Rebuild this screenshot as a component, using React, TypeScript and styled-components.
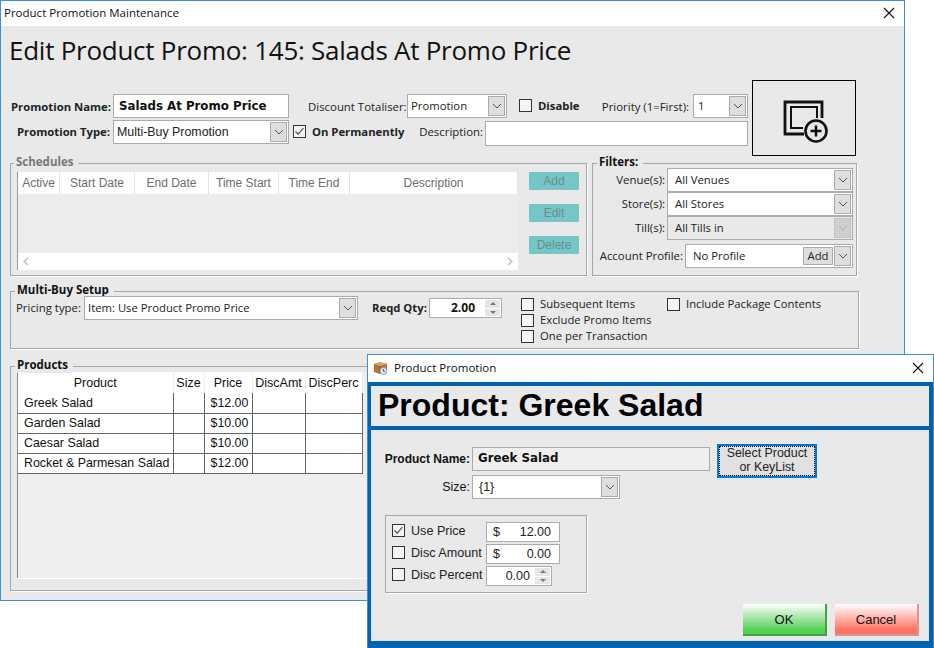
import React from 'react'
import styled, { createGlobalStyle } from 'styled-components'

const GlobalStyle = createGlobalStyle`
  html, body { margin: 0; padding: 0; background: #fff; }
  body { font-family: "Open Sans", "Noto Sans", sans-serif; font-size: 12px; color: #111; }
  * { box-sizing: border-box; }
`

const Page = styled.div`
  position: relative;
  width: 934px;
  height: 648px;
  overflow: hidden;
  background: #fff;
`

const MainWindow = styled.div`
  width: 905px;
  height: 601px;
  border: 1px solid #3e8ede;
  background: #e9e9e9;
  overflow: hidden;
`

const TitleBar = styled.div<{ $h: number; $pl: number }>`
  display: flex;
  align-items: center;
  gap: 6px;
  height: ${p => p.$h}px;
  padding: 0 9px 2px ${p => p.$pl}px;
  background: #fff;
  font-size: 11.5px;
`

const TitleText = styled.span`
  flex: 1;
`

const Heading = styled.h1`
  margin: 0;
  height: 54px;
  padding: 6px 0 0 8px;
  font-size: 26px;
  font-weight: 400;
  line-height: 36px;
  letter-spacing: -0.26px;
  color: #111;
`

const TopSection = styled.div`
  display: flex;
  height: 76px;
`

const FormColumn = styled.div`
  width: 751px;
  padding-top: 14px;
  display: flex;
  flex-direction: column;
  gap: 2px;
`

const Row = styled.div`
  display: flex;
  align-items: flex-start;
  height: 24px;
`

const Label = styled.label<{ $w: number; $bold?: boolean; $ml?: number; $left?: boolean; $lh?: number }>`
  flex: none;
  width: ${p => p.$w}px;
  margin-left: ${p => p.$ml || 0}px;
  text-align: ${p => (p.$left ? 'left' : 'right')};
  font-weight: ${p => (p.$bold ? 700 : 400)};
  font-size: ${p => (p.$bold ? '11.3px' : '11.4px')};
  line-height: ${p => p.$lh || 24}px;
  white-space: nowrap;
  color: #222;
`

const TextInput = styled.div<{ $w: number; $h?: number; $ml?: number; $mt?: number; $grey?: boolean; $lh?: number }>`
  flex: none;
  width: ${p => p.$w}px;
  height: ${p => p.$h || 24}px;
  margin-left: ${p => p.$ml || 0}px;
  margin-top: ${p => p.$mt || 0}px;
  padding-left: 5px;
  border: 1px solid #ababab;
  background: ${p => (p.$grey ? '#efefef' : '#fff')};
  font-family: "DejaVu Sans", sans-serif;
  font-weight: 700;
  font-size: 11.8px;
  line-height: ${p => p.$lh || 20}px;
  color: #111;
`

const ComboBox = styled.div<{ $w: number; $ml?: number; $disabled?: boolean }>`
  flex: none;
  position: relative;
  display: flex;
  align-items: center;
  width: ${p => p.$w}px;
  height: 24px;
  margin-left: ${p => p.$ml || 0}px;
  padding: 0 19px 0 3px;
  border: 1px solid #ababab;
  background: ${p => (p.$disabled ? '#e9e9e9' : '#fff')};
  font-size: 11.3px;
  color: #222;
  white-space: nowrap;
`

const ComboText = styled.span<{ $pad?: number; $sans?: boolean }>`
  flex: 1;
  padding-left: ${p => p.$pad || 0}px;
  margin-top: -1px;
  ${p => (p.$sans ? 'font-family: "Liberation Sans", sans-serif; font-size: 12.4px;' : '')}
`

const ArrowBox = styled.span<{ $disabled?: boolean }>`
  position: absolute;
  right: 1px;
  top: 1px;
  bottom: 1px;
  width: 17px;
  display: flex;
  align-items: center;
  justify-content: center;
  border: 1px solid ${p => (p.$disabled ? '#c4c4c4' : '#ababab')};
  background: ${p => (p.$disabled ? '#cfcfcf' : '#dedede')};
`

const Chevron = ({ color = '#555' }: { color?: string }) => (
  <svg width="10" height="6" viewBox="0 0 10 6">
    <path d="M1 1 L5 5 L9 1" fill="none" stroke={color} strokeWidth="1" />
  </svg>
)

const Combo = (props: { w: number; ml?: number; text: string; disabled?: boolean; pad?: number; sans?: boolean; children?: React.ReactNode }) => (
  <ComboBox $w={props.w} $ml={props.ml} $disabled={props.disabled}>
    <ComboText $pad={props.pad} $sans={props.sans}>{props.text}</ComboText>
    {props.children}
    <ArrowBox $disabled={props.disabled}>
      <Chevron color={props.disabled ? '#aaa' : '#555'} />
    </ArrowBox>
  </ComboBox>
)

const CheckBox = styled.span<{ $ml?: number; $mt?: number }>`
  flex: none;
  display: inline-flex;
  align-items: center;
  justify-content: center;
  width: 13px;
  height: 13px;
  margin-left: ${p => p.$ml || 0}px;
  margin-top: ${p => (p.$mt === undefined ? 5 : p.$mt)}px;
  border: 1px solid #333;
  background: #f4f4f4;
`

const Tick = () => (
  <svg width="11" height="11" viewBox="0 0 11 11">
    <path d="M1.5 5.5 L4.2 8.2 L9.5 2" fill="none" stroke="#444" strokeWidth="1.1" />
  </svg>
)

const ImageBox = styled.div`
  flex: none;
  width: 104px;
  height: 76px;
  padding: 7px 0 0 4px;
  border: 1px solid #000;
  display: flex;
  align-items: center;
  justify-content: center;
`

const MiddleRow = styled.div`
  display: flex;
  gap: 5px;
  margin: 7px 0 0 9px;
`

const Group = styled.div<{ $w: number; $h: number; $mt?: number; $ml?: number }>`
  position: relative;
  flex: none;
  width: ${p => p.$w}px;
  height: ${p => p.$h}px;
  margin-top: ${p => p.$mt || 0}px;
  margin-left: ${p => p.$ml || 0}px;
  border: 1px solid #a6a6a6;
  box-shadow: 1px 1px 0 #fff;
`

const GroupTitle = styled.span<{ $muted?: boolean; $left?: number }>`
  position: absolute;
  left: ${p => p.$left || 4}px;
  top: -10px;
  padding: 0 5px 0 2px;
  background: #e9e9e9;
  font-size: 11.5px;
  font-weight: 700;
  line-height: 16px;
  color: ${p => (p.$muted ? '#777' : '#111')};
`

const SchedulesBody = styled.div`
  display: flex;
  padding: 8px 0 0 6px;
  gap: 11px;
`

const SchedulesGrid = styled.div`
  width: 501px;
  height: 98px;
  display: flex;
  flex-direction: column;
  border-left: 1px solid #999;
  background: #ececec;
`

const SchedulesHeader = styled.div`
  display: flex;
  height: 22px;
  background: #fff;
`

const SchedulesColumn = styled.div<{ $w: number }>`
  flex: ${p => (p.$w ? `0 0 ${p.$w}px` : 1)};
  border-right: 1px solid #e4e4e4;
  font-family: "Liberation Sans", sans-serif;
  font-size: 12px;
  line-height: 23px;
  text-align: center;
  color: #6d6d6d;
`

const ScrollStrip = styled.div`
  margin-top: auto;
  height: 17px;
  display: flex;
  align-items: center;
  justify-content: space-between;
  padding: 0 5px;
  background: #fff;
`

const SideButtons = styled.div`
  display: flex;
  flex-direction: column;
  gap: 14px;
`

const TealButton = styled.div`
  width: 50px;
  height: 18px;
  background: #75c6c6;
  font-family: "Liberation Sans", sans-serif;
  font-size: 12px;
  line-height: 18px;
  text-align: center;
  color: #6b8d8d;
`

const FiltersBody = styled.div`
  display: flex;
  flex-direction: column;
  padding-top: 4px;
`

const FilterRow = styled.div<{ $mt?: number }>`
  display: flex;
  height: 24px;
  margin-top: ${p => p.$mt || 0}px;
`

const AddChip = styled.span`
  position: absolute;
  right: 19px;
  top: 2px;
  width: 30px;
  height: 18px;
  border: 1px solid #ababab;
  background: #dedede;
  text-align: center;
  line-height: 15px;
`

const MultiBuyBody = styled.div`
  display: flex;
  padding: 4px 0 0 0;
`

const Spin = styled.span<{ $h: number }>`
  position: absolute;
  right: 1px;
  top: 1px;
  width: 15px;
  height: ${p => p.$h}px;
  display: flex;
  flex-direction: column;
  gap: 1px;
`

const SpinPart = styled.span`
  flex: 1;
  display: flex;
  align-items: center;
  justify-content: center;
  background: #e6e6e6;
`

const Triangle = styled.span<{ $down?: boolean }>`
  width: 0;
  height: 0;
  border-left: 3px solid transparent;
  border-right: 3px solid transparent;
  ${p => (p.$down ? 'border-top: 3px solid #777;' : 'border-bottom: 3px solid #777;')}
`

const Spinner = ({ h }: { h: number }) => (
  <Spin $h={h}>
    <SpinPart><Triangle /></SpinPart>
    <SpinPart><Triangle $down /></SpinPart>
  </Spin>
)

const QtyBox = styled.div`
  position: relative;
  flex: none;
  width: 73px;
  height: 20px;
  margin: 2px 0 0 1px;
  padding-right: 26px;
  border: 1px solid #ababab;
  background: #fff;
  font-weight: 700;
  font-size: 12px;
  line-height: 17px;
  text-align: right;
`

const OptionList = styled.div<{ $ml: number; $w: number }>`
  display: flex;
  flex-direction: column;
  gap: 3px;
  margin: 2px 0 0 ${p => p.$ml}px;
  width: ${p => p.$w}px;
`

const OptionRow = styled.div`
  display: flex;
  align-items: flex-start;
  gap: 6px;
  height: 13px;
  font-size: 11.3px;
  line-height: 12px;
  color: #222;
  white-space: nowrap;
`

const ProductsGrid = styled.div`
  margin: 5px 0 0 6px;
  width: 870px;
  height: 206px;
  border-left: 1px solid #888;
  background: #efefef;
  box-shadow: 0 1px 0 #fff;
`

const ProductTable = styled.table`
  border-collapse: collapse;
  table-layout: fixed;
  width: 344px;
  font-family: "Liberation Sans", sans-serif;
  font-size: 12.4px;
  color: #111;

  th {
    height: 21px;
    padding: 1px 0 0;
    font-weight: 400;
    font-size: 12.5px;
    background: #fff;
    border-right: 1px solid #eee;
    text-align: center;
  }

  td {
    height: 20px;
    padding: 0 3px 0 6px;
    background: #fff;
    border: 1px solid #666;
    white-space: nowrap;
  }

  tr td:first-child { border-left: 0; }
  tr:first-child td { border-top: 0; }
`

const Dialog = styled.div`
  position: absolute;
  left: 367px;
  top: 354px;
  width: 567px;
  height: 294px;
  display: flex;
  flex-direction: column;
  border: 1px solid #3e8ede;
  border-bottom: 0;
  background: #fff;
`

const DialogFrame = styled.div`
  flex: 1;
  display: flex;
  flex-direction: column;
  border: 4px solid #0063b1;
  border-bottom-width: 7px;
  border-left-width: 3px;
  background: #e9e9e9;
`

const DialogHeading = styled.h2`
  margin: 0;
  height: 44px;
  padding-left: 7px;
  border-bottom: 4px solid #0063b1;
  font-family: "Liberation Sans", sans-serif;
  font-size: 32px;
  font-weight: 700;
  line-height: 38px;
  color: #000;
`

const DialogPanel = styled.div`
  flex: 1;
  display: flex;
  flex-direction: column;
  padding-top: 16px;
  border: 1px solid #e2e2e2;
  border-radius: 4px;
  font-family: "Liberation Sans", sans-serif;
`

const DialogTop = styled.div`
  display: flex;
  align-items: flex-start;
`

const DialogFields = styled.div`
  display: flex;
  flex-direction: column;
  gap: 4px;
  width: 338px;
`

const DialogRow = styled.div`
  display: flex;
  height: 24px;
`

const DialogLabel = styled.span<{ $bold?: boolean }>`
  flex: none;
  width: 98px;
  margin-right: 2px;
  text-align: right;
  font-size: ${p => (p.$bold ? '12px' : '12.5px')};
  font-weight: ${p => (p.$bold ? 700 : 400)};
  line-height: 24px;
`

const SelectButton = styled.div`
  width: 100px;
  height: 34px;
  margin: -3px 0 0 7px;
  padding-top: 0;
  border: 2px solid #0078d7;
  background: #e1e1e1;
  font-size: 12.4px;
  line-height: 14px;
  text-align: center;
  color: #222;
  outline: 1px dotted #000;
  outline-offset: -3px;
`

const PriceGroup = styled.div`
  width: 202px;
  height: 78px;
  margin: 16px 0 0 13px;
  padding: 6px 0 0 6px;
  display: flex;
  flex-direction: column;
  gap: 2px;
  border: 1px solid #a6a6a6;
  box-shadow: 1px 1px 0 #fff;
`

const PriceRow = styled.div`
  display: flex;
  height: 20px;
  font-size: 12.6px;
  color: #222;
`

const PriceLabel = styled.span`
  flex: none;
  width: 81px;
  padding-left: 6px;
  line-height: 18px;
  white-space: nowrap;
`

const MoneyBox = styled.div<{ $w: number }>`
  position: relative;
  flex: none;
  display: flex;
  justify-content: space-between;
  width: ${p => p.$w}px;
  height: 20px;
  padding: 0 8px 0 6px;
  border: 1px solid #ababab;
  background: #fff;
  font-size: 12.5px;
  line-height: 18px;
`

const PercentBox = styled(MoneyBox)`
  padding-right: 21px;
  justify-content: flex-end;
`

const DialogFooter = styled.div`
  margin-top: auto;
  display: flex;
  justify-content: flex-end;
  gap: 8px;
  padding: 0 9px 4px 0;
`

const ActionButton = styled.div<{ $tone: string; $edge: string }>`
  width: 84px;
  height: 32px;
  background: linear-gradient(#fff, ${p => p.$tone} 85%);
  border-right: 2px solid ${p => p.$edge};
  border-bottom: 2px solid ${p => p.$edge};
  font-size: 13px;
  line-height: 32px;
  text-align: center;
  color: #111;
`

const CloseIcon = () => (
  <svg width="12" height="12" viewBox="0 0 12 12">
    <path d="M1 1 L11 11 M11 1 L1 11" stroke="#111" strokeWidth="1.1" />
  </svg>
)

const PromoIcon = () => (
  <svg width="46" height="44" viewBox="0 0 46 44">
    <path d="M39 18 V2 H2 V34 H21" fill="none" stroke="#111" strokeWidth="2.8" />
    <path d="M34 18 V7 H8 V28 H20" fill="none" stroke="#111" strokeWidth="2" />
    <circle cx="33" cy="31" r="10.5" fill="#e9e9e9" stroke="#111" strokeWidth="2.6" />
    <path d="M33 25.5 V36.5 M27.5 31 H38.5" stroke="#111" strokeWidth="2.6" />
  </svg>
)

const BoxIcon = () => (
  <svg width="15" height="15" viewBox="0 0 15 15">
    <path d="M1 4 L7 2 L14 4 L14 12 L7 14 L1 12 Z" fill="#b5763a" />
    <path d="M1 4 L7 6 L14 4 L7 2 Z" fill="#dba566" />
    <path d="M7 6 V14" stroke="#8a5524" strokeWidth="1" />
    <circle cx="10.5" cy="11" r="3.5" fill="#dfe6f2" stroke="#8296b8" strokeWidth="0.8" />
    <path d="M10.5 9 V11.3 H12" stroke="#31528f" strokeWidth="0.9" fill="none" />
  </svg>
)

const ScrollArrow = ({ d }: { d: string }) => (
  <svg width="6" height="9" viewBox="0 0 6 9">
    <path d={d} fill="none" stroke="#bdbdbd" strokeWidth="1.4" />
  </svg>
)

const scheduleColumns: [string, number][] = [
  ['Active', 42], ['Start Date', 75], ['End Date', 74], ['Time Start', 70], ['Time End', 71], ['Description', 0],
]

const products = [
  ['Greek Salad', '$12.00'],
  ['Garden Salad', '$10.00'],
  ['Caesar Salad', '$10.00'],
  ['Rocket & Parmesan Salad', '$12.00'],
]

const App = () => {
  return (
    <Page>
      <GlobalStyle />
      <MainWindow>
        <TitleBar $h={25} $pl={3}>
          <TitleText>Product Promotion Maintenance</TitleText>
          <CloseIcon />
        </TitleBar>
        <Heading>Edit Product Promo: 145: Salads At Promo Price</Heading>

        <TopSection>
          <FormColumn>
            <Row>
              <Label $w={110} $bold $lh={26}>Promotion Name:</Label>
              <TextInput $w={176} $ml={2} $lh={22}>Salads At Promo Price</TextInput>
              <Label $w={97} $ml={19} $lh={26}>Discount Totaliser:</Label>
              <Combo w={100} ml={2} text="Promotion" />
              <CheckBox $ml={12} />
              <Label $w={40} $ml={6} $bold $left>Disable</Label>
              <Label $w={89} $ml={22} $lh={26}>Priority (1=First):</Label>
              <Combo w={55} ml={4} text="1" pad={1} />
            </Row>
            <Row>
              <Label $w={109} $bold>Promotion Type:</Label>
              <Combo w={176} ml={3} text="Multi-Buy Promotion" sans />
              <CheckBox $ml={4}><Tick /></CheckBox>
              <Label $w={90} $ml={6} $bold $left>On Permanently</Label>
              <Label $w={64} $ml={17}>Description:</Label>
              <TextInput $w={263} $h={25} $ml={2} $mt={1} />
            </Row>
          </FormColumn>
          <ImageBox><PromoIcon /></ImageBox>
        </TopSection>

        <MiddleRow>
          <Group $w={577} $h={113}>
            <GroupTitle $muted $left={3}>Schedules</GroupTitle>
            <SchedulesBody>
              <SchedulesGrid>
                <SchedulesHeader>
                  {scheduleColumns.map(([name, w]) => (
                    <SchedulesColumn key={name} $w={w}>{name}</SchedulesColumn>
                  ))}
                </SchedulesHeader>
                <ScrollStrip>
                  <ScrollArrow d="M5 1 L1 4.5 L5 8" />
                  <ScrollArrow d="M1 1 L5 4.5 L1 8" />
                </ScrollStrip>
              </SchedulesGrid>
              <SideButtons>
                <TealButton>Add</TealButton>
                <TealButton>Edit</TealButton>
                <TealButton>Delete</TealButton>
              </SideButtons>
            </SchedulesBody>
          </Group>

          <Group $w={265} $h={113}>
            <GroupTitle $left={4}>Filters:</GroupTitle>
            <FiltersBody>
              <FilterRow>
                <Label $w={72}>Venue(s):</Label>
                <Combo w={186} ml={2} text="All Venues" pad={4} />
              </FilterRow>
              <FilterRow>
                <Label $w={72}>Store(s):</Label>
                <Combo w={186} ml={2} text="All Stores" pad={4} />
              </FilterRow>
              <FilterRow>
                <Label $w={72}>Till(s):</Label>
                <Combo w={186} ml={2} text="All Tills in" pad={4} disabled />
              </FilterRow>
              <FilterRow $mt={4}>
                <Label $w={90}>Account Profile:</Label>
                <Combo w={168} ml={2} text="No Profile" pad={4}>
                  <AddChip>Add</AddChip>
                </Combo>
              </FilterRow>
            </FiltersBody>
          </Group>
        </MiddleRow>

        <Group $w={849} $h={58} $mt={15} $ml={9}>
          <GroupTitle $left={4}>Multi-Buy Setup</GroupTitle>
          <MultiBuyBody>
            <Label $w={63} $left $ml={5}>Pricing type:</Label>
            <Combo w={274} ml={5} text="Item: Use Product Promo Price" />
            <Label $w={56} $ml={14} $bold $left>Reqd Qty:</Label>
            <QtyBox>2.00<Spinner h={16} /></QtyBox>
            <OptionList $ml={19} $w={146}>
              <OptionRow><CheckBox $mt={0} />Subsequent Items</OptionRow>
              <OptionRow><CheckBox $mt={0} />Exclude Promo Items</OptionRow>
              <OptionRow><CheckBox $mt={0} />One per Transaction</OptionRow>
            </OptionList>
            <OptionList $ml={0} $w={170}>
              <OptionRow><CheckBox $mt={0} />Include Package Contents</OptionRow>
            </OptionList>
          </MultiBuyBody>
        </Group>

        <Group $w={883} $h={225} $mt={17} $ml={9}>
          <GroupTitle $left={4}>Products</GroupTitle>
          <ProductsGrid>
            <ProductTable>
              <colgroup>
                <col style={{ width: 155 }} />
                <col style={{ width: 31 }} />
                <col style={{ width: 48 }} />
                <col style={{ width: 53 }} />
                <col style={{ width: 57 }} />
              </colgroup>
              <thead>
                <tr>
                  <th>Product</th><th>Size</th><th>Price</th><th>DiscAmt</th><th>DiscPerc</th>
                </tr>
              </thead>
              <tbody>
                {products.map(([name, price]) => (
                  <tr key={name}>
                    <td>{name}</td><td /><td>{price}</td><td /><td />
                  </tr>
                ))}
              </tbody>
            </ProductTable>
          </ProductsGrid>
        </Group>
      </MainWindow>

      <Dialog>
        <TitleBar $h={27} $pl={5}>
          <BoxIcon />
          <TitleText>Product Promotion</TitleText>
          <CloseIcon />
        </TitleBar>
        <DialogFrame>
          <DialogHeading>Product: Greek Salad</DialogHeading>
          <DialogPanel>
            <DialogTop>
              <DialogFields>
                <DialogRow>
                  <DialogLabel $bold>Product Name:</DialogLabel>
                  <TextInput $w={238} $grey>Greek Salad</TextInput>
                </DialogRow>
                <DialogRow>
                  <DialogLabel>Size:</DialogLabel>
                  <Combo w={148} text="{1}" pad={3} sans />
                </DialogRow>
              </DialogFields>
              <SelectButton>Select Product<br />or KeyList</SelectButton>
            </DialogTop>
            <PriceGroup>
              <PriceRow>
                <CheckBox $mt={2}><Tick /></CheckBox>
                <PriceLabel>Use Price</PriceLabel>
                <MoneyBox $w={74}><span>$</span><span>12.00</span></MoneyBox>
              </PriceRow>
              <PriceRow>
                <CheckBox $mt={2} />
                <PriceLabel>Disc Amount</PriceLabel>
                <MoneyBox $w={74}><span>$</span><span>0.00</span></MoneyBox>
              </PriceRow>
              <PriceRow>
                <CheckBox $mt={2} />
                <PriceLabel>Disc Percent</PriceLabel>
                <PercentBox $w={66}>0.00<Spinner h={16} /></PercentBox>
              </PriceRow>
            </PriceGroup>
            <DialogFooter>
              <ActionButton $tone="#57d057" $edge="#3fa53f">OK</ActionButton>
              <ActionButton $tone="#ff7565" $edge="#d9988e">Cancel</ActionButton>
            </DialogFooter>
          </DialogPanel>
        </DialogFrame>
      </Dialog>
    </Page>
  )
}

export default App
